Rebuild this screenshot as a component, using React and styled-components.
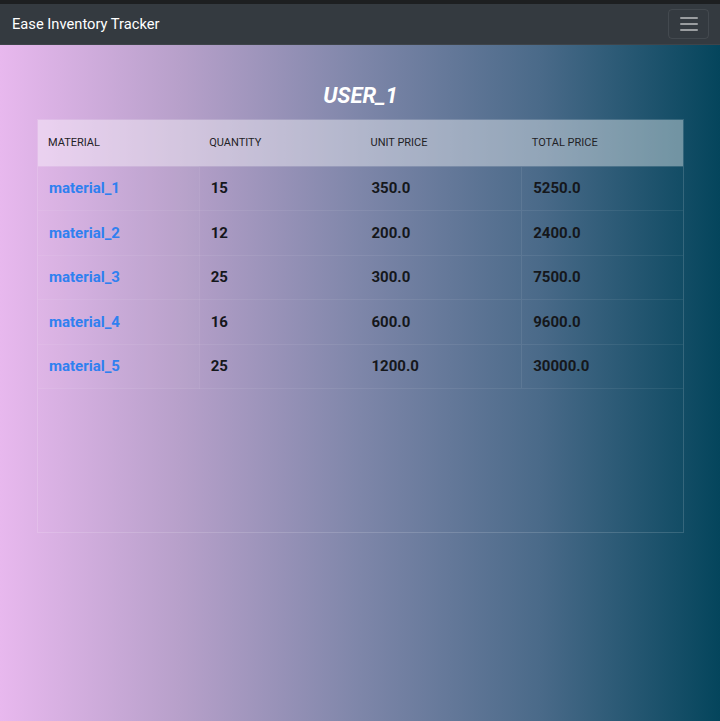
import styled, { createGlobalStyle } from 'styled-components';

const GlobalStyle = createGlobalStyle`
  body {
    margin: 0;
    font-family: Roboto, "Liberation Sans", sans-serif;
    background: #1d1f21;
  }
  * { box-sizing: border-box; }
`;

const TopStrip = styled.div`
  height: 4px;
  background: #1d1f21;
`;

const NavBar = styled.nav`
  display: flex;
  align-items: center;
  justify-content: space-between;
  height: 41px;
  padding: 0 11px 0 12px;
  background: #343a40;
  border-bottom: 1px solid #3e444a;
`;

const Brand = styled.span`
  color: #ffffff;
  font-size: 14.7px;
`;

const Toggler = styled.button`
  display: flex;
  flex-direction: column;
  justify-content: center;
  align-items: center;
  gap: 4px;
  width: 41px;
  height: 30px;
  background: transparent;
  border: 1px solid rgba(255, 255, 255, 0.08);
  border-radius: 4px;
  padding: 0;
`;

const TogglerBar = styled.span`
  display: block;
  width: 18px;
  height: 2px;
  background: rgba(255, 255, 255, 0.5);
  border-radius: 1px;
`;

const Page = styled.main`
  min-height: 676px;
  background: linear-gradient(to right, #e8b8ee 0%, #b7a0ca 25%, #7e86a9 50%, #4a6a89 75%, #04455c 100%);
  padding: 37px 36px 40px 37px;
`;

const Title = styled.h2`
  margin: 0 0 9px;
  text-align: center;
  color: #ffffff;
  font-size: 22px;
  font-weight: 700;
  font-style: italic;
  line-height: 28px;
`;

const TableBox = styled.div`
  height: 414px;
  border: 1px solid rgba(255, 255, 255, 0.15);
`;

const Table = styled.table`
  width: 100%;
  border-collapse: collapse;
  table-layout: fixed;
`;

const HeadCell = styled.th`
  height: 46px;
  padding: 0 10px;
  text-align: left;
  font-size: 11px;
  font-weight: 400;
  color: #1f2226;
  text-transform: uppercase;
  background: rgba(255, 255, 255, 0.4);
  border-bottom: 1px solid rgba(255, 255, 255, 0.15);
`;

const Cell = styled.td`
  height: 44.5px;
  padding: 0 11px;
  font-size: 15px;
  font-weight: 700;
  color: #15171b;
  border-bottom: 1px solid rgba(255, 255, 255, 0.07);
  border-right: ${p => (p.$edge ? '1px solid rgba(255,255,255,0.08)' : 'none')};
  border-left: ${p => (p.$last ? '1px solid rgba(255,255,255,0.08)' : 'none')};
  background: ${p => (p.$edge ? 'rgba(255,255,255,0.03)' : 'transparent')};
`;

const MaterialLink = styled.a`
  color: #2f80f0;
  text-decoration: none;
  font-weight: 700;
`;

const rows = [
  ['material_1', '15', '350.0', '5250.0'],
  ['material_2', '12', '200.0', '2400.0'],
  ['material_3', '25', '300.0', '7500.0'],
  ['material_4', '16', '600.0', '9600.0'],
  ['material_5', '25', '1200.0', '30000.0'],
];

export default function App() {
  return (
    <>
      <GlobalStyle />
      <TopStrip />
      <NavBar>
        <Brand>Ease Inventory Tracker</Brand>
        <Toggler aria-label="menu">
          <TogglerBar />
          <TogglerBar />
          <TogglerBar />
        </Toggler>
      </NavBar>
      <Page>
        <Title>USER_1</Title>
        <TableBox>
          <Table>
            <thead>
              <tr>
                <HeadCell>Material</HeadCell>
                <HeadCell>Quantity</HeadCell>
                <HeadCell>Unit Price</HeadCell>
                <HeadCell>Total Price</HeadCell>
              </tr>
            </thead>
            <tbody>
              {rows.map(r => (
                <tr key={r[0]}>
                  <Cell $edge><MaterialLink href="#">{r[0]}</MaterialLink></Cell>
                  <Cell>{r[1]}</Cell>
                  <Cell>{r[2]}</Cell>
                  <Cell $last>{r[3]}</Cell>
                </tr>
              ))}
            </tbody>
          </Table>
        </TableBox>
      </Page>
    </>
  );
}
